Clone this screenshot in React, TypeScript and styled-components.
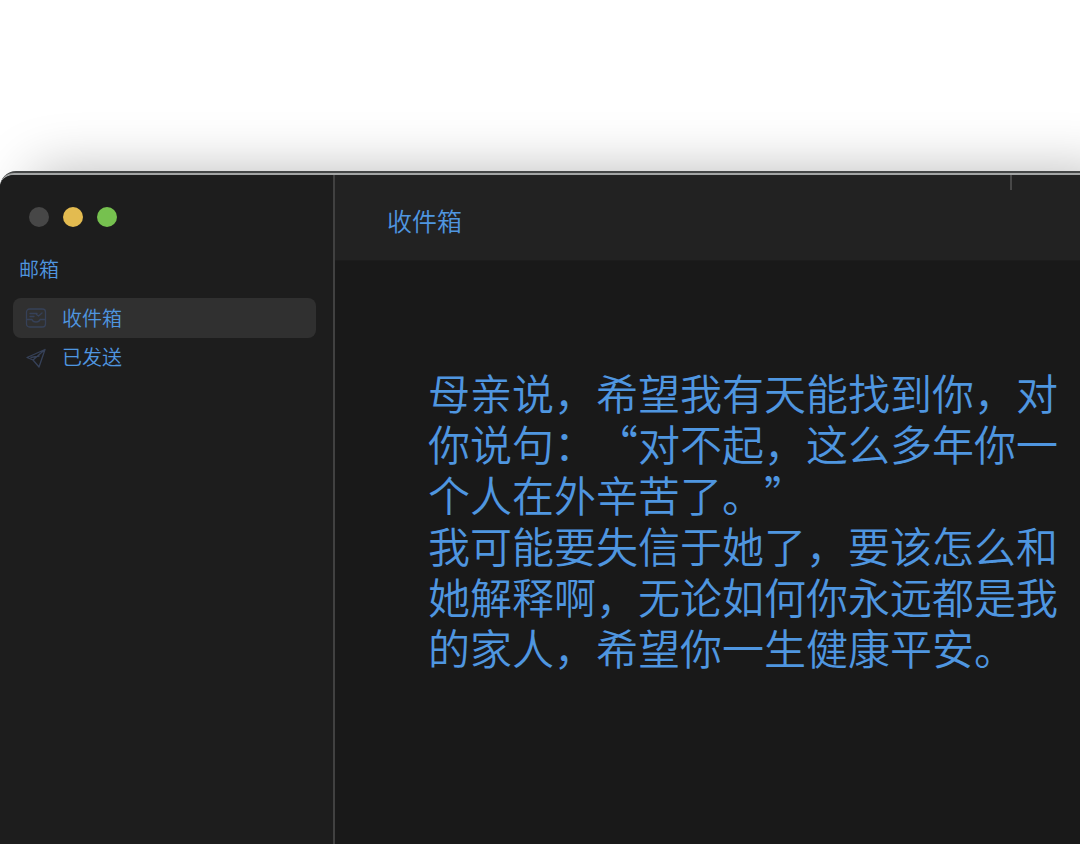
import React, { useState } from "react";
import styled, { createGlobalStyle } from "styled-components";

const GlobalStyle = createGlobalStyle`
  * { box-sizing: border-box; }
  html, body, #root { height: 100%; }
  body {
    margin: 0;
    overflow-x: hidden;
    background: #ffffff;
    color: #4f96e0;
    font-family: "Noto Sans CJK SC", sans-serif;
    font-weight: 350;
    text-spacing-trim: space-all;
  }
`;

const Desktop = styled.div`
  display: flex;
  min-height: 100vh;
  padding-top: 171px;
  overflow: hidden;
`;

const Window = styled.div`
  flex: 1;
  display: flex;
  border-top: 2px solid #454747;
  border-top-left-radius: 16px;
  background: #1d1d1d;
  box-shadow: 32px 0 56px rgba(0, 0, 0, 0.27);
`;

const Frame = styled.div`
  flex: 1;
  display: flex;
  overflow: hidden;
  border-top: 2px solid #a4a6a6;
  border-top-left-radius: 14px;
`;

const Sidebar = styled.aside`
  flex: none;
  width: 335px;
  padding: 32px 17px 0 13px;
  border-right: 2px solid #414141;
  background: #1d1d1d;
`;

const Lights = styled.div`
  display: flex;
  gap: 14px;
  padding-left: 16px;
`;

const Light = styled.button<{ $color: string }>`
  width: 20px;
  height: 20px;
  padding: 0;
  border: 0;
  border-radius: 50%;
  background: ${(p) => p.$color};
`;

const SectionTitle = styled.h2`
  margin: 28px 0 15px;
  padding-left: 6px;
  font-size: 20px;
  line-height: 28px;
  font-weight: inherit;
`;

const FolderList = styled.nav`
  display: flex;
  flex-direction: column;
`;

const Folder = styled.button<{ $active: boolean }>`
  display: flex;
  align-items: center;
  gap: 15px;
  height: 40px;
  padding: 0 12px;
  border: 0;
  border-radius: 8px;
  background: ${(p) => (p.$active ? "#303030" : "transparent")};
  color: inherit;
  font: inherit;
  font-size: 20px;
  line-height: 28px;

  & + & {
    margin-top: -1px;
  }
`;

const FolderIcon = styled.svg`
  flex: none;
  width: 22px;
  height: 22px;
  fill: none;
  stroke: #364158;
  stroke-width: 1.3;
  stroke-linejoin: round;
  stroke-linecap: round;
`;

const Content = styled.main`
  flex: 1;
  min-width: 0;
  display: flex;
  flex-direction: column;
  background: #191919;
`;

const Toolbar = styled.header`
  display: flex;
  height: 86px;
  padding: 0 68px 0 52px;
  justify-content: space-between;
  border-bottom: 1px solid #1c1c1c;
  background: #222222;
`;

const Heading = styled.h1`
  margin: 0;
  font-size: 25px;
  line-height: 90px;
  font-weight: inherit;
`;

const Divider = styled.span`
  width: 2px;
  height: 15px;
  background: #484848;
`;

const Message = styled.article`
  padding: 105px 16px 32px 93px;
  font-size: 42px;
  line-height: 51px;
`;

const Paragraph = styled.p`
  margin: 0;
`;

const folders = [
  {
    name: "收件箱",
    icon: (
      <>
        <rect x="1.5" y="2" width="19" height="18" rx="3" />
        <path d="M5 6.500h7M17 6l-3.500 3-2-1.500M5 9.500h4M1.500 12.500H7c.5 2 2 2.500 4 2.500s3.500-.5 4-2.500h5.500" />
      </>
    ),
  },
  {
    name: "已发送",
    icon: <path d="M20 3.500 2 11.500l6 2.500 6 7zM20 3.500 8 14M6 11.500l8-1.500" />,
  },
];

export default function App() {
  const [active, setActive] = useState("收件箱");
  return (
    <>
      <GlobalStyle />
      <Desktop>
        <Window>
          <Frame>
            <Sidebar>
              <Lights>
                <Light $color="#474747" aria-label="关闭" />
                <Light $color="#e3bb50" aria-label="最小化" />
                <Light $color="#76c14f" aria-label="缩放" />
              </Lights>
              <SectionTitle>邮箱</SectionTitle>
              <FolderList>
                {folders.map((f) => (
                  <Folder key={f.name} $active={f.name === active} onClick={() => setActive(f.name)}>
                    <FolderIcon viewBox="0 0 22 22" aria-hidden="true">{f.icon}</FolderIcon>
                    {f.name}
                  </Folder>
                ))}
              </FolderList>
            </Sidebar>
            <Content>
              <Toolbar>
                <Heading>{active}</Heading>
                <Divider />
              </Toolbar>
              <Message>
                <Paragraph>母亲说，希望我有天能找到你，对你说句：“对不起，这么多年你一个人在外辛苦了。”</Paragraph>
                <Paragraph>我可能要失信于她了，要该怎么和她解释啊，无论如何你永远都是我的家人，希望你一生健康平安。</Paragraph>
              </Message>
            </Content>
          </Frame>
        </Window>
      </Desktop>
    </>
  );
}
